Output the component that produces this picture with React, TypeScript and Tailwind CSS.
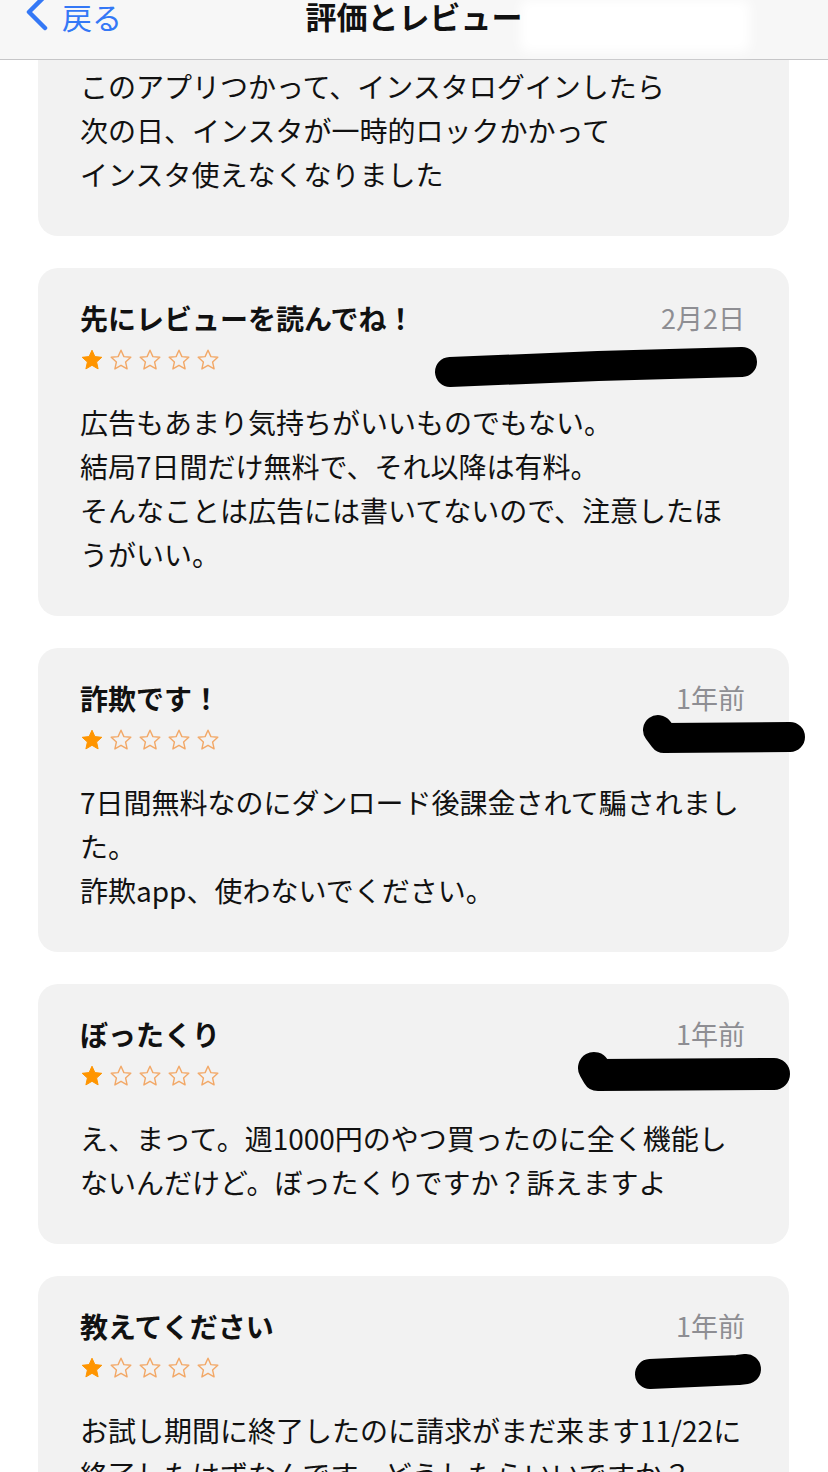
import React from 'react';

type Review = {
  title?: string;
  date?: string;
  body: string;
  blob?: React.ReactNode;
};

const jp = { fontFamily: '"Noto Sans CJK JP", "Noto Sans", sans-serif' };

function Star({ filled }: { filled: boolean }) {
  return (
    <svg width="24" height="24" viewBox="0 0 24 24" className="shrink-0">
      <path
        d="M12 2.2l2.9 6.4 6.9.7-5.2 4.7 1.5 6.9L12 17.3l-6.1 3.6 1.5-6.9-5.2-4.7 6.9-.7z"
        fill={filled ? '#ff9500' : 'none'}
        stroke={filled ? '#ff9500' : '#f2a867'}
        strokeWidth={filled ? 1 : 1.4}
        strokeLinejoin="round"
      />
    </svg>
  );
}

// black marker scribbles covering the user names
function Blob({ d, w = 32 }: { d: string; w?: number }) {
  return (
    <svg className="absolute left-0 top-0 overflow-visible" width="1" height="1">
      <path d={d} stroke="#000" strokeWidth={w} strokeLinecap="round" strokeLinejoin="round" fill="none" />
    </svg>
  );
}

const reviews: Review[] = [
  {
    title: '先にレビューを読んでね！',
    date: '2月2日',
    body: '広告もあまり気持ちがいいものでもない。\n結局7日間だけ無料で、それ以降は有料。\nそんなことは広告には書いてないので、注意したほうがいい。',
    blob: <Blob d="M412 104 L560 98 L704 94" w={30} />,
  },
  {
    title: '詐欺です！',
    date: '1年前',
    body: '7日間無料なのにダンロード後課金されて騙されました。\n詐欺app、使わないでください。',
    blob: <Blob d="M620 82 L626 90 L752 89" w={30} />,
  },
  {
    title: 'ぼったくり',
    date: '1年前',
    body: 'え、まって。週1000円のやつ買ったのに全く機能しないんだけど。ぼったくりですか？訴えますよ',
    blob: <Blob d="M556 84 L560 91 L736 90" w={32} />,
  },
  {
    title: '教えてください',
    date: '1年前',
    body: 'お試し期間に終了したのに請求がまだ来ます11/22に終了したはずなんです。どうしたらいいですか？',
    blob: <Blob d="M612 98 L700 94 L708 93" w={30} />,
  },
];

function ReviewCard({ r }: { r: Review }) {
  return (
    <div className="relative rounded-[20px] bg-[#f2f2f2] pl-[42px] pr-[44px] pt-[28px] pb-[40px]">
      <div className="flex items-center justify-between h-[44px]">
        <span className="text-[28px] font-bold text-[#111]">{r.title}</span>
        <span className="text-[27px] text-[#8e8e93]">{r.date}</span>
      </div>
      <div className="flex items-center gap-[5px] h-[40px]">
        <Star filled />
        <Star filled={false} />
        <Star filled={false} />
        <Star filled={false} />
        <Star filled={false} />
      </div>
      <p className="mt-[20px] whitespace-pre-line text-[28px] leading-[44px] text-[#111]">{r.body}</p>
      {r.blob}
    </div>
  );
}

export default function App() {
  return (
    <div className="h-[1472px] w-[828px] overflow-hidden bg-white" style={jp}>
      {/* Nav bar */}
      <header className="relative h-[60px] border-b border-[#c6c6c8] bg-[#f7f7f7]">
        <div className="absolute left-[520px] top-0 h-[52px] w-[230px] rounded-[8px] bg-white blur-[6px]" />
        <div className="relative flex h-[32px] items-center">
          <div className="flex items-center pl-[24px] text-[#3478f6]">
            <svg width="26" height="40" viewBox="0 0 26 40" className="-mt-[4px]">
              <path d="M21 2 L5 18 L21 34" stroke="#3478f6" strokeWidth="4.5" fill="none" strokeLinecap="round" strokeLinejoin="round" />
            </svg>
            <span className="ml-[12px] text-[30px] leading-[32px]">戻る</span>
          </div>
          <div className="absolute left-0 right-0 text-center text-[31px] font-bold leading-[32px] text-[#111]">
            評価とレビュー
          </div>
        </div>
      </header>

      <div className="flex flex-col gap-[32px] px-[38px] pr-[39px]">
        <div className="rounded-b-[20px] bg-[#f2f2f2] pl-[42px] pr-[44px] pt-[4px] pb-[40px]">
          <p className="whitespace-pre-line text-[28px] leading-[44px] text-[#111]">
            {'このアプリつかって、インスタログインしたら\n次の日、インスタが一時的ロックかかって\nインスタ使えなくなりました'}
          </p>
        </div>
        {reviews.map((r, i) => (
          <ReviewCard key={i} r={r} />
        ))}
      </div>
    </div>
  );
}
